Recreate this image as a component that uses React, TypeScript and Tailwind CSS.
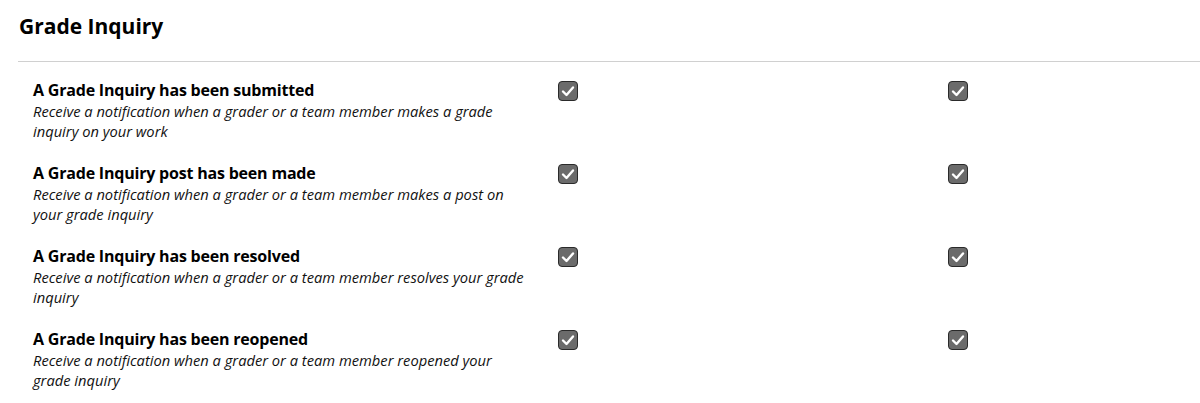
import React from 'react';

const rows = [
  {
    title: 'A Grade Inquiry has been submitted',
    desc: 'Receive a notification when a grader or a team member makes a grade inquiry on your work',
  },
  {
    title: 'A Grade Inquiry post has been made',
    desc: 'Receive a notification when a grader or a team member makes a post on your grade inquiry',
  },
  {
    title: 'A Grade Inquiry has been resolved',
    desc: 'Receive a notification when a grader or a team member resolves your grade inquiry',
  },
  {
    title: 'A Grade Inquiry has been reopened',
    desc: 'Receive a notification when a grader or a team member reopened your grade inquiry',
  },
];

function CheckedBox() {
  return (
    <span className="flex h-[20px] w-[20px] items-center justify-center rounded-[4px] border border-[#2a2a2a] bg-[#6b6b6b]">
      <svg width="14" height="14" viewBox="0 0 14 14" fill="none">
        <path d="M2 7.5 L5.5 11 L12 3.5" stroke="white" strokeWidth="2.4" strokeLinecap="round" strokeLinejoin="round" />
      </svg>
    </span>
  );
}

export default function App() {
  return (
    <div className="min-h-[403px] bg-white text-black" style={{ fontFamily: '"Open Sans", Lato, sans-serif' }}>
      {/* Section header */}
      <div className="pl-[19px] pt-[12px]">
        <h2 className="text-[21px] font-bold leading-[28px]">Grade Inquiry</h2>
      </div>
      <div className="ml-[18px] mt-[21px] border-t border-[#d0d0d0]" />

      {/* Notification rows */}
      <div className="pl-[33px] pt-[18px]">
        {rows.map((row) => (
          <div key={row.title} className="flex h-[83px] items-start">
            <div className="w-[525px] shrink-0">
              <p className="text-[16px] font-bold leading-[20px] tracking-[-0.2px]">{row.title}</p>
              <p className="mt-[1px] w-[495px] text-[14.7px] italic leading-[20px] text-[#111]">{row.desc}</p>
            </div>
            <div className="w-[390px] shrink-0 pt-[1px]">
              <CheckedBox />
            </div>
            <div className="pt-[1px]">
              <CheckedBox />
            </div>
          </div>
        ))}
      </div>
    </div>
  );
}
